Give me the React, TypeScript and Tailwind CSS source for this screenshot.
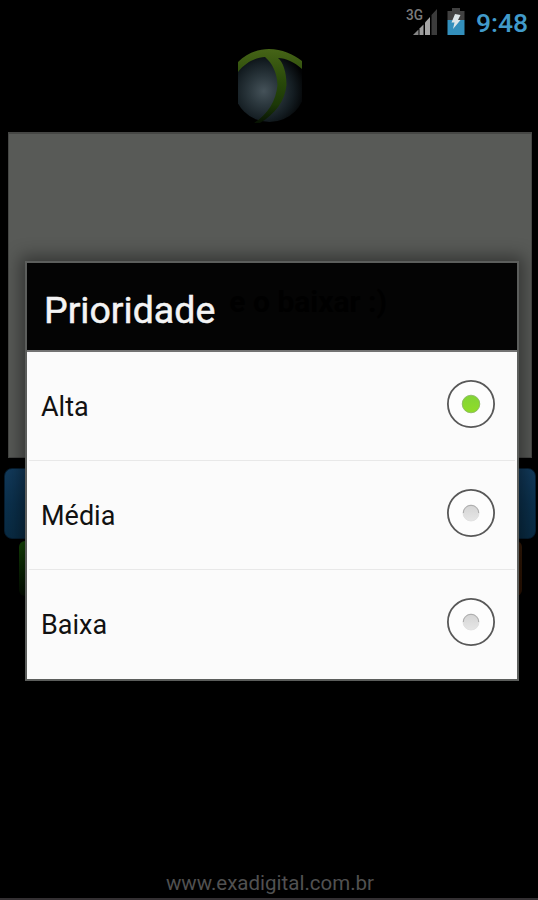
import { useState } from "react";
import clsx from "clsx";

const options = ["Alta", "Média", "Baixa"];

function StatusBar() {
  return (
    <div className="flex h-11 shrink-0 items-start pr-2.5">
      <div className="flex flex-1 justify-end">
        <svg width="34" height="34" viewBox="0 0 34 34" className="mt-1 mr-2">
          <text x="1" y="15.5" fontSize="14.5" fontFamily="Roboto, sans-serif" fontWeight="500" fill="#7b7b7b" textLength="17" lengthAdjust="spacingAndGlyphs">
            3G
          </text>
          <path d="M8 31L13.5 25.5V31Z" fill="#858585" />
          <path d="M14.5 31V24.5L18.5 20.5V31Z" fill="#9c9c9c" />
          <path d="M20 31V18.5L25 13V31Z" fill="#a5a5a5" />
          <path d="M26.5 31V11L32 5V31Z" fill="#3b3b3b" />
        </svg>
        <svg width="18" height="28" viewBox="0 0 18 28" className="mt-2 mr-[11px]">
          <path d="M5 0H13V3H17.5V12H0.5V3H5Z" fill="#414141" />
          <rect x="0.5" y="12" width="17" height="15" fill="#338fbc" />
          <path d="M8 6L13.5 7L11 12H13.5L6 21L7.5 14.5H4.5Z" fill="#dce5e8" />
        </svg>
      </div>
      <span className="mt-[7px] w-[52px] text-[26.5px] leading-8 font-medium whitespace-nowrap text-[#419aca]">9:48</span>
    </div>
  );
}

function Logo() {
  return (
    <svg width="70" height="80" viewBox="0 0 70 80">
      <defs>
        <radialGradient id="globe" cx="0.42" cy="0.57" r="0.58">
          <stop offset="0" stopColor="#455259" />
          <stop offset="0.35" stopColor="#2b373d" />
          <stop offset="0.7" stopColor="#141d22" />
          <stop offset="1" stopColor="#020304" />
        </radialGradient>
        <linearGradient id="leaf" x1="0" y1="0" x2="0" y2="1">
          <stop offset="0" stopColor="#466417" />
          <stop offset="0.45" stopColor="#284809" />
          <stop offset="0.75" stopColor="#1c3807" />
          <stop offset="1" stopColor="#071203" />
        </linearGradient>
        <clipPath id="globeClip">
          <rect x="4" y="0" width="64" height="80" />
        </clipPath>
      </defs>
      <g clipPath="url(#globeClip)">
        <circle cx="35.5" cy="42" r="36" fill="url(#globe)" />
        <path
          d="M4 18C13 9 24 5 35 5C48 5 59 10 68 17V25C60 18 52 14 44 14C49 18 52.5 28 52.5 41C51 57 41 70 26 79H20C34 70 42 57 43.5 41C43 28 38 19 31 13C22 13.5 12 18 4 28Z"
          fill="url(#leaf)"
        />
      </g>
    </svg>
  );
}

function Radio({ checked }: { checked: boolean }) {
  return (
    <svg width="50" height="50" viewBox="0 0 50 50" className="mb-[5px]">
      <defs>
        <linearGradient id="radioOn" x1="0" y1="0" x2="0" y2="1">
          <stop offset="0" stopColor="#82d437" />
          <stop offset="1" stopColor="#90dc28" />
        </linearGradient>
        <linearGradient id="radioOff" x1="0" y1="0" x2="0" y2="1">
          <stop offset="0" stopColor="#d4d4d4" />
          <stop offset="1" stopColor="#e6e6e6" />
        </linearGradient>
      </defs>
      <circle cx="25" cy="25" r="23.1" fill="#fdfdfd" stroke="#585858" strokeWidth="1.8" />
      {checked ? (
        <circle cx="25" cy="25" r="8.8" fill="url(#radioOn)" stroke="#86b35f" strokeWidth="0.8" />
      ) : (
        <>
          <circle cx="25" cy="25" r="8" fill="url(#radioOff)" stroke="#dedede" strokeWidth="0.8" />
          <path d="M17.3 25A7.7 7.7 0 0 1 32.7 25" fill="none" stroke="#aaaaaa" strokeWidth="1" />
        </>
      )}
    </svg>
  );
}

export default function App() {
  const [selected, setSelected] = useState("Alta");

  return (
    <div className="relative flex h-[900px] w-[538px] flex-col overflow-hidden bg-black font-['Roboto',sans-serif]">
      <StatusBar />
      <div className="flex h-[88px] shrink-0 justify-center">
        <Logo />
      </div>

      {/* message form, dimmed under the dialog */}
      <div className="mr-[6px] ml-2 h-[326px] shrink-0 border border-t-2 border-[#454644] bg-[#585a57]" />
      <div className="mt-[10px] mr-0.5 ml-1 h-[71px] shrink-0 rounded-lg border border-[#061d30] bg-linear-to-b from-[#123a5b] via-[#0b304c] to-[#092b43]" />
      <div className="mt-0.5 mr-[16px] ml-[19px] flex h-[55px] shrink-0 justify-between">
        <div className="w-40 rounded-md bg-linear-to-b from-[#164b08] to-[#030d01]" />
        <div className="w-40 rounded-md bg-linear-to-b from-[#361c09] to-[#2c1202]" />
      </div>
      <div className="mt-auto flex h-[33px] shrink-0 flex-col border-b-2 border-[#343033] pl-0.5 text-center">
        <span className="text-[20.5px] leading-8 text-[#515151]">www.exadigital.com.br</span>
      </div>

      <div
        role="dialog"
        className="absolute top-[261px] left-[25px] flex h-[420px] w-[494px] flex-col border-2 border-[#5c5e5c] bg-[#fbfbfb] shadow-[0_0_16px_5px_rgba(0,0,0,0.4)]"
      >
        <div className="relative flex h-[89px] shrink-0 items-center border-b-2 border-[#737373] bg-[#040404] pt-[9px] pl-[17px]">
          <span className="absolute top-4 right-[130px] text-[30px] font-bold text-black">e o baixar :)</span>
          <h1 className="relative text-[37.5px] leading-none text-[#f4f4f4] [-webkit-text-stroke:0.5px_#f4f4f4]">Prioridade</h1>
        </div>
        <div className="flex flex-1 flex-col">
          {options.map((option, i) => (
            <button
              key={option}
              type="button"
              role="radio"
              aria-checked={selected === option}
              onClick={() => setSelected(option)}
              className={clsx(
                "mx-0.5 flex h-[109px] shrink-0 items-center justify-between pr-[19px] pl-3 text-[27px] text-[#111]",
                i < options.length - 1 && "border-b border-[#e8e8e8]"
              )}
            >
              <span className="pt-0.5">{option}</span>
              <Radio checked={selected === option} />
            </button>
          ))}
        </div>
      </div>
    </div>
  );
}
